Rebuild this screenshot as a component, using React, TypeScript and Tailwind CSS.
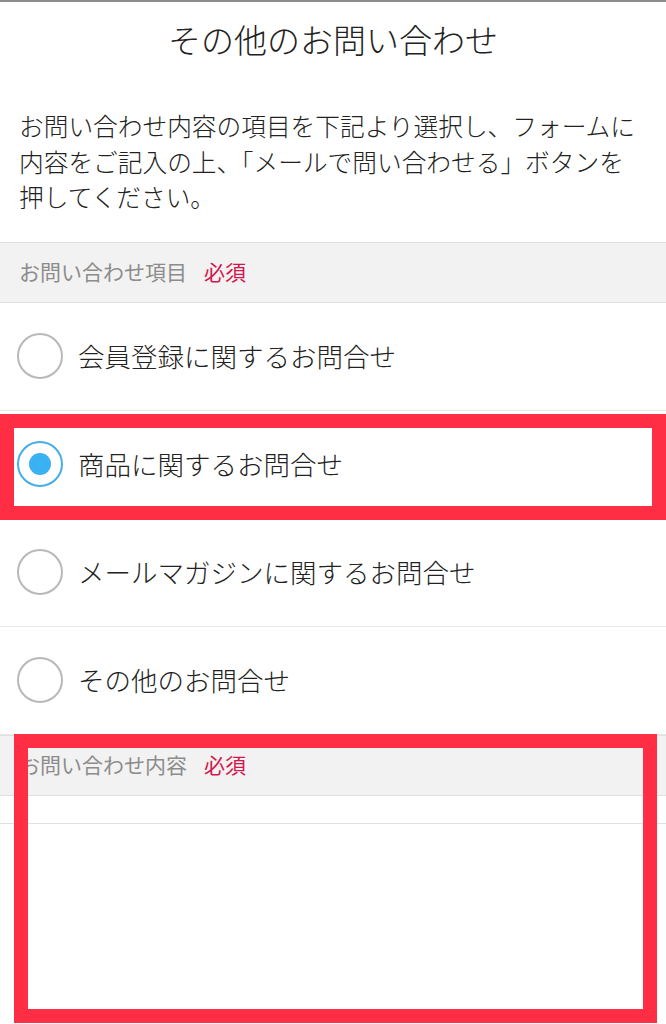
import { useState } from 'react';

const options = [
  '会員登録に関するお問合せ',
  '商品に関するお問合せ',
  'メールマガジンに関するお問合せ',
  'その他のお問合せ',
];

const SectionHeader = ({ label }: { label: string }) => (
  <div className="h-[61px] flex items-center bg-[#f2f2f2] border-y border-[#e0e0e0] px-[19px]">
    <span className="text-[21px] text-[#8c8c8c]">{label}</span>
    <span className="text-[21px] text-[#d2174f] ml-[17px]">必須</span>
  </div>
);

const RadioRow = ({
  label,
  checked,
  onSelect,
}: {
  label: string;
  checked: boolean;
  onSelect: () => void;
}) => (
  <button
    onClick={onSelect}
    className="w-full h-[108px] flex items-center border-b border-[#e8e8e8] pl-[17px] text-left"
  >
    {checked ? (
      <span className="w-[46px] h-[46px] rounded-full border-2 border-[#45aee6] flex items-center justify-center shrink-0">
        <span className="w-[22px] h-[22px] rounded-full bg-[#39b1f3]" />
      </span>
    ) : (
      <span className="w-[46px] h-[46px] rounded-full border-2 border-[#b8b8b8] shrink-0" />
    )}
    <span className="ml-[15px] text-[26.5px] text-[#222] font-light">{label}</span>
  </button>
);

export default function App() {
  const [selected, setSelected] = useState(1);

  return (
    <div
      className="min-h-screen bg-white border-t-2 border-[#8c8c8c] overflow-hidden"
      style={{ fontFamily: '"Noto Sans CJK JP", "Noto Sans", sans-serif' }}
    >
      {/* ── Title ── */}
      <div className="h-[76px] flex items-center justify-center">
        <h1 className="text-[33px] text-[#222] font-light">その他のお問い合わせ</h1>
      </div>

      {/* ── Intro ── */}
      <p className="px-[19px] pt-[30px] pb-[27px] text-[24.7px] leading-[35.5px] text-[#222] font-light">
        お問い合わせ内容の項目を下記より選択し、フォームに
        <br />
        内容をご記入の上、「メールで問い合わせる」ボタンを
        <br />
        押してください。
      </p>

      {/* ── Inquiry type ── */}
      <SectionHeader label="お問い合わせ項目" />
      <div>
        {options.map((opt, i) => (
          <div key={opt} className="relative">
            <RadioRow label={opt} checked={selected === i} onSelect={() => setSelected(i)} />
            {i === 1 && (
              <div className="absolute left-0 right-0 top-[3px] bottom-[-1px] border-[14px] border-[#ff2e45] pointer-events-none" />
            )}
          </div>
        ))}
      </div>

      {/* ── Inquiry content ── */}
      <div className="relative">
        <SectionHeader label="お問い合わせ内容" />
        <div className="h-[27px]" />
        <textarea className="block w-full h-[220px] border-t border-[#e0e0e0] resize-none outline-none" />
        <div className="absolute left-[14px] w-[643px] top-[-1px] h-[289px] border-[14px] border-[#ff2e45] pointer-events-none" />
      </div>
    </div>
  );
}
